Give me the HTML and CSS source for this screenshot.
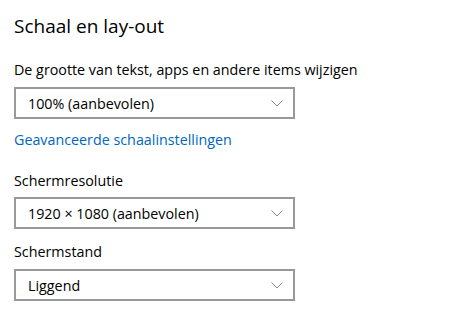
FILE: index.html
```html
<!DOCTYPE html>
<html lang="nl">
<head>
<meta charset="utf-8">
<link rel="stylesheet" href="styles.css">
</head>
<body>
<main class="page">
  <h1 class="title">Schaal en lay-out</h1>
  <div class="field">
    <div class="label">De grootte van tekst, apps en andere items wijzigen</div>
    <div class="select"><span>100% (aanbevolen)</span><svg class="chev" width="12" height="7" viewBox="0 0 12 7"><path d="M0.5 0.5 L6 6 L11.5 0.5" fill="none" stroke="#8a8a8a" stroke-width="1"/></svg></div>
  </div>
  <a class="link" href="#">Geavanceerde schaalinstellingen</a>
  <div class="field field-res">
    <div class="label">Schermresolutie</div>
    <div class="select"><span>1920 × 1080 (aanbevolen)</span><svg class="chev" width="12" height="7" viewBox="0 0 12 7"><path d="M0.5 0.5 L6 6 L11.5 0.5" fill="none" stroke="#8a8a8a" stroke-width="1"/></svg></div>
  </div>
  <div class="field field-orient">
    <div class="label">Schermstand</div>
    <div class="select"><span>Liggend</span><svg class="chev" width="12" height="7" viewBox="0 0 12 7"><path d="M0.5 0.5 L6 6 L11.5 0.5" fill="none" stroke="#8a8a8a" stroke-width="1"/></svg></div>
  </div>
</main>
</body>
</html>
```
FILE: styles.css
```css
html, body {
  margin: 0;
  padding: 0;
  background: #ffffff;
}
body {
  font-family: "Open Sans", "Noto Sans", sans-serif;
  color: #000000;
}
.page {
  padding: 12px 0 0 14px;
  display: flex;
  flex-direction: column;
  align-items: flex-start;
}
.title {
  margin: 0;
  font-size: 19px;
  font-weight: 400;
  line-height: 28px;
}
.field {
  display: flex;
  flex-direction: column;
  gap: 7px;
  margin-top: 20px;
}
.label {
  font-size: 14.3px;
  line-height: 20px;
}
.select {
  box-sizing: border-box;
  width: 281px;
  height: 32px;
  border: 2px solid #999999;
  display: flex;
  align-items: center;
  justify-content: space-between;
  padding: 0 10px 0 12px;
  font-size: 14.3px;
}
.chev {
  display: block;
}
.link {
  margin-top: 11px;
  font-size: 14.3px;
  line-height: 20px;
  color: #0067c0;
  text-decoration: none;
}
.field-res {
  margin-top: 21px;
  gap: 6px;
}
.field-orient {
  margin-top: 13px;
}
```
